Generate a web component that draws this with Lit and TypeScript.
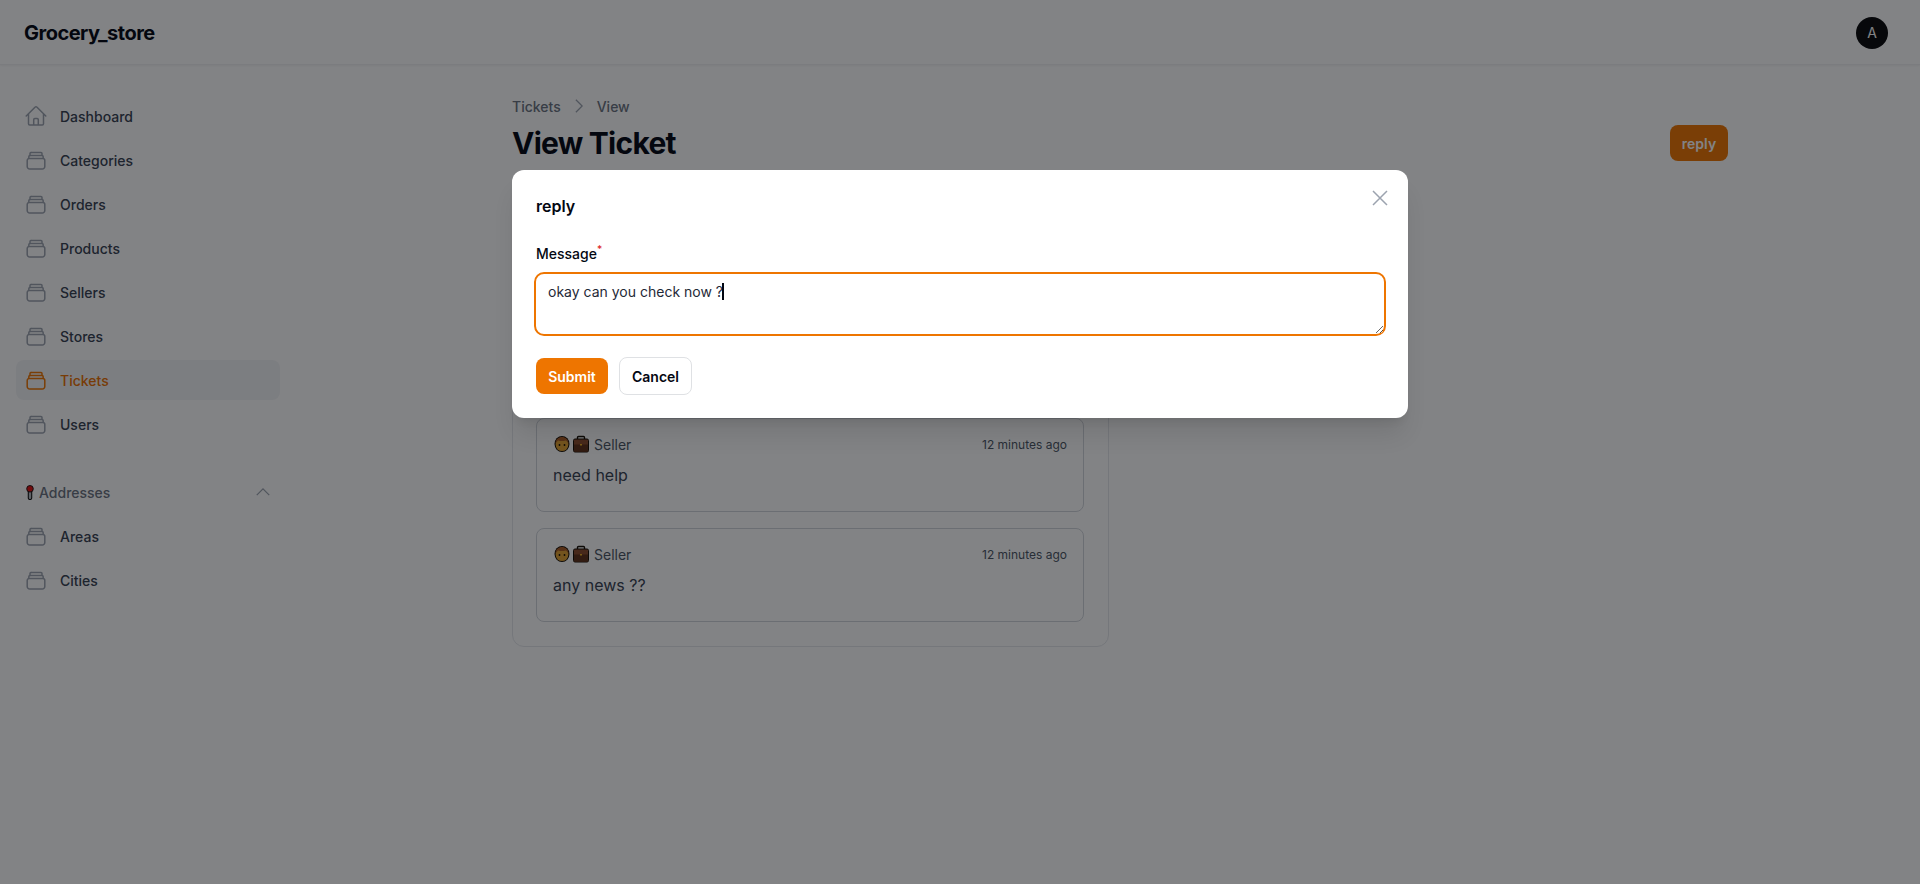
import { LitElement, html, css, svg } from 'lit';
import { customElement } from 'lit/decorators.js';

const stackIcon = svg`<path d="M7 4.500h10a1 1 0 0 1 1 1v1.200M6 7.500h12a1.200 1.200 0 0 1 1.200 1.200v1M5.200 10.500h13.600a2 2 0 0 1 2 2v6a2.500 2.500 0 0 1-2.500 2.500H5.700a2.500 2.500 0 0 1-2.500-2.500v-6a2 2 0 0 1 2-2Z" /><path d="M6 6.700V5.500a1 1 0 0 1 1-1M4.800 9.700v-1a1.200 1.200 0 0 1 1.200-1.200" />`;
const homeIcon = svg`<path d="M2.200 12 11.200 3a1.100 1.100 0 0 1 1.600 0l9 9M4.500 9.800v9.900c0 .7.500 1.200 1.200 1.200h12.600c.7 0 1.200-.5 1.200-1.200V9.800M9.700 20.900v-5.200c0-.6.500-1.100 1.100-1.100h2.400c.6 0 1.100.5 1.100 1.100v5.200" />`;

const navItems = ['Categories', 'Orders', 'Products', 'Sellers', 'Stores', 'Tickets', 'Users'];
const addressItems = ['Areas', 'Cities'];
const messages = ['need help', 'any news ??'];

@customElement('app-root')
export class AppRoot extends LitElement {
  static styles = css`
    :host {
      display: block;
      height: 884px;
      overflow: hidden;
      position: relative;
      background: #fff;
      color: #030712;
      font-family: Inter, 'Liberation Sans', sans-serif;
    }

    .topbar {
      height: 65px;
      background: #fff;
      border-bottom: 1px solid #f0f1f2;
      box-sizing: border-box;
      box-shadow: 0 1px 2px rgba(0, 0, 0, 0.05);
      display: flex;
      align-items: center;
      justify-content: space-between;
      padding: 1px 32px 0 24px;
      position: relative;
    }

    .brand {
      font-size: 20px;
      line-height: 28px;
      font-weight: 700;
      letter-spacing: -0.5px;
      padding-top: 1px;
    }

    .avatar {
      width: 32px;
      height: 32px;
      border-radius: 50%;
      background: #09090b;
      color: #fff;
      font-size: 14px;
      display: flex;
      align-items: center;
      justify-content: center;
    }

    .body {
      display: flex;
    }

    .sidebar {
      width: 264px;
      padding: 31px 0 0 16px;
      box-sizing: content-box;
      flex: none;
    }

    .nav {
      display: flex;
      flex-direction: column;
      gap: 4px;
    }

    .item {
      height: 40px;
      display: flex;
      align-items: center;
      gap: 12px;
      padding: 0 8px;
      border-radius: 8px;
      font-size: 14px;
      font-weight: 500;
      color: #374151;
    }

    .item svg {
      width: 24px;
      height: 24px;
      fill: none;
      stroke: #9ca3af;
      stroke-width: 1.5;
      stroke-linecap: round;
      stroke-linejoin: round;
      flex: none;
    }

    .item.active {
      background: #f3f4f6;
      color: #ea7000;
    }

    .item.active svg {
      stroke: #ee7500;
    }

    .group {
      height: 36px;
      margin-top: 30px;
      margin-bottom: 6px;
      display: flex;
      align-items: center;
      padding: 0 7px 0 10px;
      gap: 5px;
      font-size: 14px;
      font-weight: 500;
      color: #6b7280;
    }

    .pin {
      width: 8px;
      height: 15px;
      flex: none;
    }

    .group span {
      flex: 1;
    }

    .chevron {
      width: 20px;
      height: 20px;
      fill: none;
      stroke: #9ca3af;
      stroke-width: 1.5;
    }

    main {
      flex: 1;
      padding: 31px 0 0 232px;
    }

    .content {
      width: 1216px;
    }

    .crumbs {
      display: flex;
      align-items: center;
      gap: 8px;
      height: 20px;
      font-size: 14px;
      font-weight: 500;
      color: #6b7280;
    }

    .crumbs svg {
      width: 20px;
      height: 20px;
      fill: none;
      stroke: #9ca3af;
      stroke-width: 1.5;
    }

    .head {
      display: flex;
      align-items: center;
      justify-content: space-between;
      margin-top: 9px;
    }

    h1 {
      margin: 0;
      font-size: 30px;
      line-height: 36px;
      font-weight: 700;
      letter-spacing: -0.75px;
    }

    .reply-btn {
      background: #ee7500;
      color: #fff;
      font-size: 14px;
      font-weight: 600;
      height: 36px;
      width: 58px;
      border-radius: 8px;
      display: flex;
      align-items: center;
      justify-content: center;
    }

    .ticket {
      width: 597px;
      box-sizing: border-box;
      margin-top: 32px;
      padding: 48px 24px 24px 23px;
      background: #fff;
      border: 1px solid #e5e7eb;
      border-radius: 12px;
      display: flex;
      flex-direction: column;
      gap: 16px;
    }

    .details {
      height: 160px;
    }

    .message {
      height: 94px;
      box-sizing: border-box;
      padding: 15px 16px 16px;
      border: 1px solid #d1d5db;
      border-radius: 8px;
      background: #fff;
    }

    .msg-head {
      display: flex;
      align-items: center;
      justify-content: space-between;
      height: 20px;
      color: #4b5563;
    }

    .author {
      display: flex;
      align-items: center;
      gap: 4px;
      font-size: 14px;
    }

    .emoji {
      width: 37px;
      height: 18px;
      flex: none;
    }

    .time {
      font-size: 12px;
    }

    .msg-body {
      margin-top: 9px;
      font-size: 16px;
      line-height: 24px;
      color: #374151;
    }

    .overlay {
      position: absolute;
      inset: 0;
      background: rgba(5, 7, 12, 0.5);
    }

    .modal {
      position: absolute;
      left: 512px;
      top: 170px;
      width: 896px;
      height: 248px;
      box-sizing: border-box;
      background: #fff;
      border-radius: 12px;
      padding: 24px;
      box-shadow: 0 20px 25px -5px rgba(0, 0, 0, 0.1), 0 8px 10px -6px rgba(0, 0, 0, 0.1);
    }

    .close {
      position: absolute;
      right: 16px;
      top: 16px;
      width: 24px;
      height: 24px;
      fill: none;
      stroke: #9ca3af;
      stroke-width: 1.5;
    }

    .modal h2 {
      margin: 0;
      font-size: 16px;
      line-height: 24px;
      font-weight: 600;
    }

    label {
      display: block;
      margin-top: 26px;
      font-size: 14px;
      line-height: 20px;
      font-weight: 500;
      color: #030712;
    }

    label sup {
      color: #dc2626;
      font-size: 10px;
      line-height: 0;
    }

    .field {
      position: relative;
      margin: 8px 0 0 -2px;
      width: 852px;
      height: 64px;
    }

    textarea {
      display: block;
      width: 100%;
      height: 100%;
      box-sizing: border-box;
      margin: 0;
      border: 2px solid #ee7500;
      border-radius: 10px;
      outline: none;
      padding: 8px 12px;
      font: 14px/20px Inter, 'Liberation Sans', sans-serif;
      color: #1f2937;
      background: #fff;
      resize: vertical;
    }

    .caret {
      position: absolute;
      left: 188px;
      top: 11px;
      width: 2px;
      height: 17px;
      background: #030712;
    }

    .actions {
      display: flex;
      gap: 11px;
      margin-top: 22px;
    }

    .btn {
      height: 36px;
      box-sizing: border-box;
      border-radius: 8px;
      display: flex;
      align-items: center;
      justify-content: center;
      font-size: 14px;
      font-weight: 600;
    }

    .submit {
      width: 72px;
      background: #ee7500;
      color: #fff;
    }

    .cancel {
      width: 73px;
      margin-top: -1px;
      height: 38px;
      background: #fff;
      border: 1px solid #dfe1e4;
      color: #030712;
    }
  `;

  private navRow(label: string, active = false) {
    return html`<div class="item ${active ? 'active' : ''}">
      <svg viewBox="0 0 24 24">${label === 'Dashboard' ? homeIcon : stackIcon}</svg>
      ${label}
    </div>`;
  }

  private sellerIcon() {
    return html`<svg class="emoji" viewBox="0 0 37 18">
      <ellipse cx="9" cy="9" rx="7.500" ry="8" fill="#140c02" />
      <ellipse cx="9" cy="9.500" rx="6.400" ry="6.600" fill="#e0a030" />
      <path d="M2.500 9C2.500 4 5.500 2 9 2s6.500 2 6.500 7c-1-2-2-3.500-3-3.500-2 .8-5 .8-7 0-1 0-2 1.500-3 3.500Z" fill="#a85a22" />
      <circle cx="6.500" cy="10" r=".9" fill="#140c02" />
      <circle cx="11.500" cy="10" r=".9" fill="#140c02" />
      <path d="M24.500 4V2.500a1 1 0 0 1 1-1h5a1 1 0 0 1 1 1V4" fill="none" stroke="#140c02" stroke-width="1.400" />
      <rect x="20.500" y="4" width="15" height="13" rx="1.500" fill="#8a4a2a" stroke="#140c02" />
      <rect x="21" y="9.500" width="14" height="7" fill="#5f3018" />
      <rect x="27" y="9" width="2" height="1.500" fill="#f0b020" />
    </svg>`;
  }

  render() {
    return html`
      <div class="topbar">
        <div class="brand">Grocery_store</div>
        <div class="avatar">A</div>
      </div>
      <div class="body">
        <aside class="sidebar">
          <div class="nav">
            ${this.navRow('Dashboard')}
            ${navItems.map((n) => this.navRow(n, n === 'Tickets'))}
          </div>
          <div class="group">
            <svg class="pin" viewBox="0 0 8 15">
              <rect x="2.300" y="5" width="3.400" height="9.500" rx="1.500" fill="#b8bcc4" stroke="#111" stroke-width="1.100" />
              <circle cx="4" cy="3.800" r="3.300" fill="#e01010" stroke="#111" stroke-width=".9" />
            </svg>
            <span>Addresses</span>
            <svg class="chevron" viewBox="0 0 24 24"><path d="M4.500 15.750l7.500-7.500 7.500 7.500" /></svg>
          </div>
          <div class="nav">${addressItems.map((n) => this.navRow(n))}</div>
        </aside>
        <main>
          <div class="content">
            <div class="crumbs">
              <span>Tickets</span>
              <svg viewBox="0 0 24 24"><path d="M8.250 4.500l7.500 7.500-7.500 7.500" /></svg>
              <span>View</span>
            </div>
            <div class="head">
              <h1>View Ticket</h1>
              <div class="reply-btn">reply</div>
            </div>
            <section class="ticket">
              <div class="details"></div>
              ${messages.map(
                (m) => html`<article class="message">
                  <div class="msg-head">
                    <div class="author">${this.sellerIcon()}<span>Seller</span></div>
                    <div class="time">12 minutes ago</div>
                  </div>
                  <div class="msg-body">${m}</div>
                </article>`,
              )}
            </section>
          </div>
        </main>
      </div>
      <div class="overlay"></div>
      <div class="modal">
        <svg class="close" viewBox="0 0 24 24"><path d="M5 5l14 14M19 5 5 19" /></svg>
        <h2>reply</h2>
        <label>Message<sup>*</sup></label>
        <div class="field">
          <textarea readonly .value=${'okay can you check now ?'}></textarea>
          <div class="caret"></div>
        </div>
        <div class="actions">
          <div class="btn submit">Submit</div>
          <div class="btn cancel">Cancel</div>
        </div>
      </div>
    `;
  }
}
